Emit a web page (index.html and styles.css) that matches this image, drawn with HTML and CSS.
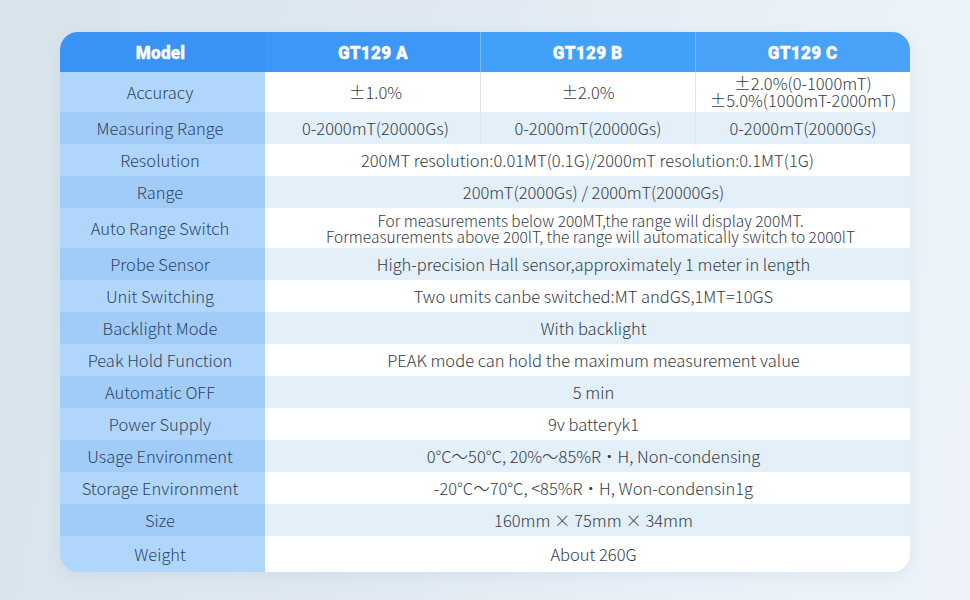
FILE: index.html
```html
<!DOCTYPE html>
<html lang="en">
<head>
<meta charset="utf-8">
<title>GT129 Specifications</title>
<link rel="stylesheet" href="styles.css">
</head>
<body>
<main class="page">
  <div class="spec">
    <div class="h h-first"><span class="ht">Model</span></div>
    <div class="h"><span class="ht">GT129 A</span></div>
    <div class="h h-div"><span class="ht">GT129 B</span></div>
    <div class="h h-div h-last"><span class="ht">GT129 C</span></div>

    <div class="lab lt">Accuracy</div>
    <div class="val w col-a">±1.0%</div>
    <div class="val w vd">±2.0%</div>
    <div class="val w vd two"><span>±2.0%(0-1000mT)</span><span>±5.0%(1000mT-2000mT)</span></div>

    <div class="lab dk">Measuring Range</div>
    <div class="val b col-a">0-2000mT(20000Gs)</div>
    <div class="val b vd">0-2000mT(20000Gs)</div>
    <div class="val b vd">0-2000mT(20000Gs)</div>

    <div class="lab lt">Resolution</div>
    <div class="val w span-c">200MT resolution:0.01MT(0.1G)/2000mT resolution:0.1MT(1G)</div>

    <div class="lab dk">Range</div>
    <div class="val b span">200mT(2000Gs) / 2000mT(20000Gs)</div>

    <div class="lab lt">Auto Range Switch</div>
    <div class="val w span two small"><span>For measurements below 200MT,the range will display 200MT.</span><span>Formeasurements above 200lT, the range will automatically switch to 2000lT</span></div>

    <div class="lab dk">Probe Sensor</div>
    <div class="val b span">High-precision Hall sensor,approximately 1 meter in length</div>

    <div class="lab lt">Unit Switching</div>
    <div class="val w span">Two umits canbe switched:MT andGS,1MT=10GS</div>

    <div class="lab dk">Backlight Mode</div>
    <div class="val b span">With backlight</div>

    <div class="lab lt">Peak Hold Function</div>
    <div class="val w span">PEAK mode can hold the maximum measurement value</div>

    <div class="lab dk">Automatic OFF</div>
    <div class="val b span">5 min</div>

    <div class="lab lt">Power Supply</div>
    <div class="val w span">9v batteryk1</div>

    <div class="lab dk">Usage Environment</div>
    <div class="val b span">0°C～50°C, 20%～85%R・H, Non-condensing</div>

    <div class="lab lt">Storage Environment</div>
    <div class="val w span">-20°C～70°C, &lt;85%R・H, Won-condensin1g</div>

    <div class="lab dk">Size</div>
    <div class="val b span">160mm × 75mm × 34mm</div>

    <div class="lab lt">Weight</div>
    <div class="val w span">About 260G</div>
  </div>
</main>
</body>
</html>
```

FILE: styles.css
```css
* { box-sizing: border-box; }
html, body { margin: 0; padding: 0; }
body {
  width: 970px;
  height: 600px;
  overflow: hidden;
  font-family: "Noto Sans CJK SC", "Noto Sans", sans-serif;
  font-weight: 300;
  background: linear-gradient(100deg, #d8e3ec 0%, #dfe8f0 40%, #e8f0f7 70%, #edf3f9 100%);
}
.page {
  padding: 32px 60px 0 60px;
}
.spec {
  display: grid;
  grid-template-columns: 205px 215px 215px 215px;
  grid-template-rows: 40px 40px 32px 32px 32px 40px 32px 32px 32px 32px 32px 32px 32px 32px 32px 36px;
  width: 850px;
  border-radius: 18px;
  overflow: hidden;
  box-shadow: 0 4px 14px rgba(120, 150, 180, 0.12);
}
.h {
  display: flex;
  align-items: center;
  justify-content: center;
  background: #3c97f6;
  color: #ffffff;
}
.ht {
  display: inline-block;
  font-family: Roboto, "Liberation Sans", sans-serif;
  font-weight: 900;
  font-size: 19px;
  transform: scaleX(0.9);
  letter-spacing: 0.3px;
  -webkit-text-stroke: 0.4px #ffffff;
}
.h-first { background: #3893f5; padding-right: 4px; }
.h-div { border-left: 1px solid #7ab8f8; background: #41a0f8; }
.h-last { background: #48a3f8; }
.lab {
  display: flex;
  align-items: center;
  justify-content: center;
  padding-right: 5px;
  color: #2e4560;
  font-size: 16.5px;
}
.lt { background: #b1d6fb; }
.dk { background: #a2ccf8; }
.val {
  display: flex;
  align-items: center;
  justify-content: center;
  text-align: center;
  color: #333c48;
  font-size: 16.5px;
  line-height: 18px;
}
.w { background: #ffffff; }
.b { background: #e3eff9; }
.vd { border-left: 1px solid #dfe4ea; }
.col-a { padding-left: 6px; }
.span { grid-column: 2 / 5; padding-left: 12px; }
.span-c { grid-column: 2 / 5; }
.two {
  flex-direction: column;
  line-height: 17px;
}
.two span { display: block; }
.small { font-size: 15.5px; line-height: 16px; padding-left: 6px; }
```
